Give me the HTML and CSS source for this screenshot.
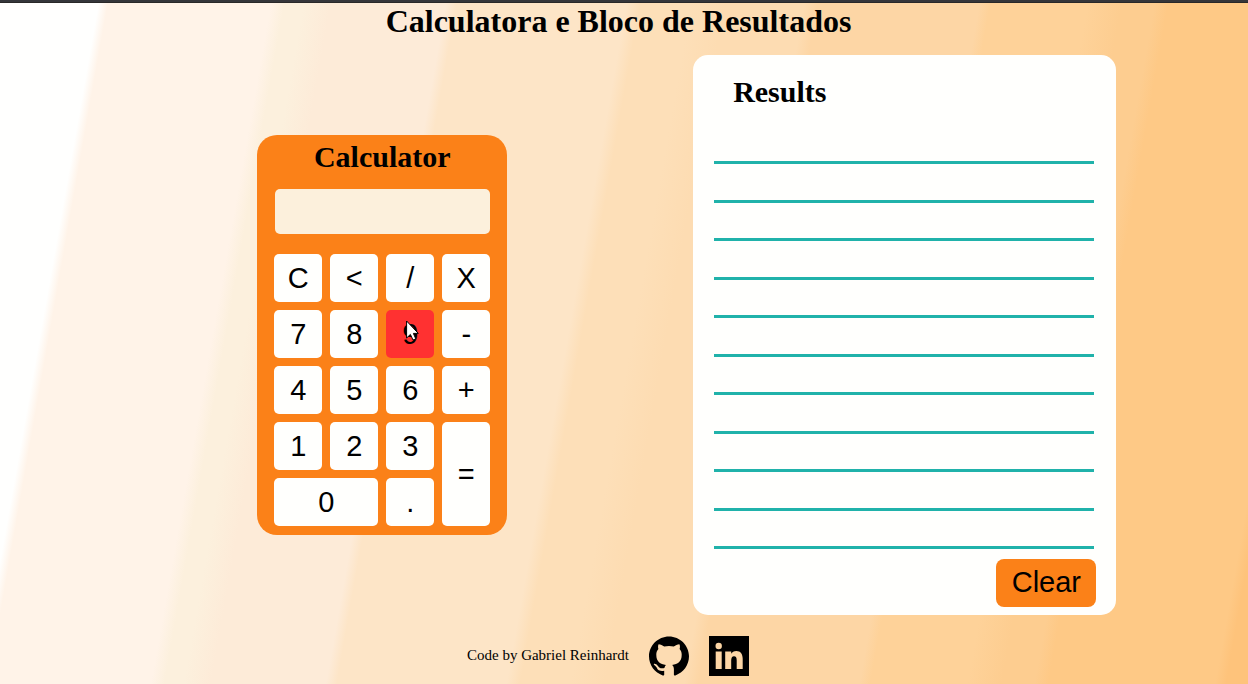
FILE: index.html
```html
<!DOCTYPE html>
<html lang="pt-BR">
<head>
<meta charset="utf-8">
<title>Calculatora e Bloco de Resultados</title>
<link rel="stylesheet" href="styles.css">
</head>
<body>
<div class="strip"></div>
<div class="page">
  <h1 class="page-title">Calculatora e Bloco de Resultados</h1>
  <main class="main">
    <section class="calculator">
      <h2 class="calculator-title">Calculator</h2>
      <input class="display" type="text" aria-label="Display" readonly>
      <div class="keys">
        <button class="key">C</button>
        <button class="key">&lt;</button>
        <button class="key">/</button>
        <button class="key">X</button>
        <button class="key">7</button>
        <button class="key">8</button>
        <button class="key key-active">9
          <svg class="cursor" viewBox="0 0 13 22" aria-hidden="true"><path d="M.6 1V18L4.4 14.4L7 20L9.8 18.9L7.4 13.4H12.3Z" fill="#fff" stroke="#000" stroke-width="1"/></svg>
        </button>
        <button class="key">-</button>
        <button class="key">4</button>
        <button class="key">5</button>
        <button class="key">6</button>
        <button class="key">+</button>
        <button class="key">1</button>
        <button class="key">2</button>
        <button class="key">3</button>
        <button class="key key-tall">=</button>
        <button class="key key-wide">0</button>
        <button class="key">.</button>
      </div>
    </section>
    <section class="results">
      <h2 class="results-title">Results</h2>
      <ul class="lines">
        <li class="line"></li>
        <li class="line"></li>
        <li class="line"></li>
        <li class="line"></li>
        <li class="line"></li>
        <li class="line"></li>
        <li class="line"></li>
        <li class="line"></li>
        <li class="line"></li>
        <li class="line"></li>
        <li class="line"></li>
      </ul>
      <button class="clear">Clear</button>
    </section>
  </main>
  <footer class="footer">
    <p class="credit">Code by Gabriel Reinhardt</p>
    <a class="social" href="#" aria-label="GitHub">
      <svg class="icon" viewBox="0 0 40 40"><path d="M20 .4C9 .4 0 9.300 0 20.300C0 29.200 5.800 36.700 13.700 39.400C14.800 39.600 15.200 39 15.200 38.400V34.700C9.600 35.700 8.300 33 7.700 31.500C7.200 30.600 6.200 29.600 5 28.700C4.300 28 5.300 27.700 6.300 27.900C9.300 28.500 9.300 32.400 13 32.300C14.200 32.300 15.100 32 15.500 31.700C15.700 30.400 16.200 29.500 16.900 28.900C11.300 28 7.300 26 7.300 18.800C7.300 16.400 8 14.600 9.400 13.100C9 11.800 8.800 10 9.600 8.200C11.500 8.200 13.600 9.400 15.200 10.500C18.200 9.700 21.800 9.700 24.800 10.500C26.400 9.400 28.500 8.200 30.400 8.200C31.200 10 31 11.800 30.600 13.100C32 14.600 32.700 16.400 32.700 18.800C32.700 26 28.700 28 23.100 28.900C24.300 29.900 24.900 31.300 24.900 33.200V38.400C24.900 39 25.300 39.600 26.400 39.400C34.300 36.700 40 29.200 40 20.300C40 9.300 31 .4 20 .4Z"/></svg>
    </a>
    <a class="social" href="#" aria-label="LinkedIn">
      <svg class="icon" viewBox="0 0 40 40"><path fill-rule="evenodd" d="M0 0H40V40H0ZM6.700 15.500V33H12.700V15.500ZM9.700 6.800A3.200 3.200 0 1 0 9.700 13.200A3.200 3.200 0 1 0 9.700 6.800ZM16.200 15.500V33H22.200V24.300C22.200 21.800 23.200 20.200 25 20.200C27 20.200 27.700 21.700 27.700 24.300V33H33.700V22.800C33.700 17.700 31.300 15 27.400 15C24.800 15 23.100 16.200 22.200 17.700V15.500Z"/></svg>
    </a>
  </footer>
</div>
</body>
</html>
```
FILE: styles.css
```css
* {
  box-sizing: border-box;
}

body {
  margin: 0;
  min-height: 100vh;
  display: flex;
  flex-direction: column;
  font-family: "Liberation Serif", "Times New Roman", serif;
  color: #000;
}

h1, h2, p, ul {
  margin: 0;
  padding: 0;
}

.strip {
  height: 3px;
  background: #35363a;
  border-bottom: 1px solid #292828;
}

.page {
  flex: 1;
  display: flex;
  flex-direction: column;
  background: linear-gradient(100deg,
    #fffffe 7.2%, #fff3e8 7.9%,
    #fff3e8 19.8%, #fcf0dd 20.8%,
    #fcf0dd 22.2%, #fdebd8 24.2%,
    #fdebd8 32.6%, #fde5c7 33.4%,
    #fde5c7 45.8%, #fddfb8 46.8%,
    #fddfb8 50.5%, #fddcb2 53%,
    #fddcb2 58.8%, #fdd6a5 59.8%,
    #fdd6a5 71.6%, #fed299 72.4%,
    #fed299 79.5%, #fdcd90 82%,
    #fdcd90 84.4%, #fec986 85.4%,
    #fec986 97.6%, #fec37b 98.4%);
}

.page-title {
  padding-right: 11px;
  margin-bottom: 15px;
  font-size: 32px;
  line-height: 37px;
  text-align: center;
}

.main {
  flex: 1;
  display: grid;
  grid-template-columns: 1fr 1fr;
  align-items: center;
  justify-items: center;
  padding: 0 82px 0 121px;
}

.calculator {
  width: 250px;
  padding: 0 17px 9px;
  border-radius: 20px;
  background: #fb8118;
}

.calculator-title {
  margin-bottom: 10px;
  font-size: 30px;
  line-height: 44px;
  text-align: center;
}

.display {
  display: block;
  width: 215px;
  height: 45px;
  margin: 0 0 20px auto;
  padding: 0 8px;
  border: 0;
  border-radius: 5px;
  background: #fcf0dc;
  font: 29px "Liberation Sans", Arial, sans-serif;
  text-align: right;
}

.keys {
  display: grid;
  grid-template-columns: repeat(4, 1fr);
  grid-auto-rows: 48px;
  gap: 8px;
}

.key,
.clear {
  padding: 0;
  border: 0;
  color: #000;
  font: 29px "Liberation Sans", Arial, sans-serif;
}

.key {
  position: relative;
  border-radius: 5px;
  background: #fffffd;
}

.key-active {
  background: #ff3131;
}

.key-tall {
  grid-row: span 2;
}

.key-wide {
  grid-column: span 2;
}

.cursor {
  position: absolute;
  top: 10px;
  left: 20px;
  width: 13px;
  height: 22px;
}

.results {
  display: flex;
  flex-direction: column;
  width: 81%;
  min-height: 560px;
  padding: 20px 20px 8px;
  border-radius: 15px;
  background: #fffffd;
}

.results-title {
  padding-left: 20px;
  margin-bottom: 17px;
  font-size: 30px;
  line-height: 34px;
}

.lines {
  flex: 1;
  display: grid;
  grid-auto-rows: 1fr;
  margin: 0 2px 10px 1px;
  list-style: none;
}

.line {
  border-bottom: 3px solid #20b2aa;
}

.clear {
  align-self: flex-end;
  width: 100px;
  height: 48px;
  padding-bottom: 2px;
  border-radius: 8px;
  background: #fb8118;
}

.footer {
  display: flex;
  align-items: center;
  justify-content: center;
  gap: 20px;
  padding: 21px 32px 8px 0;
}

.credit {
  padding-bottom: 2px;
  font-size: 15px;
}

.social {
  display: block;
  color: #000;
}

.icon {
  display: block;
  width: 40px;
  height: 40px;
  fill: currentColor;
}
```
